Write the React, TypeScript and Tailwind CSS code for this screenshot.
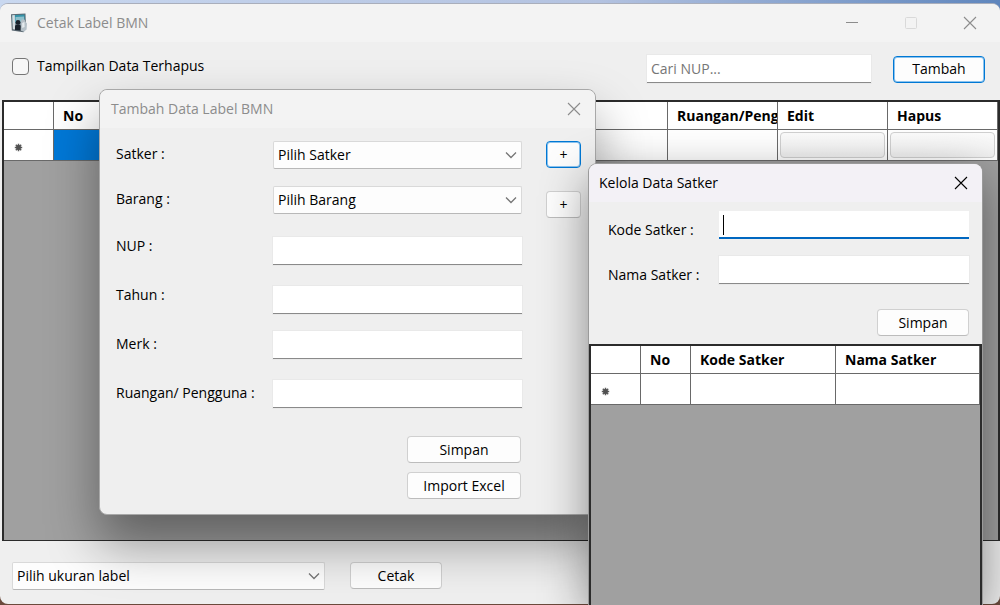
import type { ReactNode } from "react";

const inputClass =
  "block h-7 w-full border-0 border-b border-[#8a8a8a] bg-white px-1 text-sm text-black outline-none shadow-[0_0_0_1px_#e9e9e9] placeholder:text-[#767676]";

const buttonClass =
  "flex items-center justify-center rounded-[4px] border bg-[#fdfdfd] text-sm text-black";

function Button({
  children,
  size,
  primary = false,
}: {
  children: ReactNode;
  size: string;
  primary?: boolean;
}) {
  return (
    <button
      type="button"
      className={`${buttonClass} ${size} ${
        primary
          ? "border-[#0078d4] shadow-[inset_0_0_0_1px_#8cc3ee]"
          : "border-[#d0d0d0] border-b-[#bcbcbc]"
      }`}
    >
      {children}
    </button>
  );
}

function Select({ id, label, option }: { id: string; label?: string; option: string }) {
  return (
    <div className="relative">
      <select
        id={id}
        aria-label={label}
        className="block h-7 w-full appearance-none rounded-[2px] border border-[#d9d9d9] border-b-[#b8b8b8] bg-[#fdfdfd] px-1 text-sm text-black outline-none"
      >
        <option>{option}</option>
      </select>
      <svg
        viewBox="0 0 12 8"
        className="pointer-events-none absolute right-[5px] top-2.5 h-2 w-3"
        fill="none"
        stroke="#767676"
        strokeWidth="1.3"
      >
        <path d="M1 1.5 6 6.5 11 1.5" />
      </svg>
    </div>
  );
}

function CloseIcon() {
  return (
    <svg viewBox="0 0 14 14" className="size-3.5" fill="none" stroke="currentColor" strokeWidth="1.1">
      <path d="M1 1 13 13M13 1 1 13" />
    </svg>
  );
}

function NewRowMark() {
  return (
    <svg viewBox="0 0 9 9" className="size-[9px]" stroke="#5a5a5a" strokeWidth="1.5">
      <path d="M4.5 0.8V8.2M0.8 4.5H8.2M1.8 1.8 7.2 7.2M1.8 7.2 7.2 1.8" />
      <circle cx="4.5" cy="4.5" r="2.4" fill="#505050" stroke="none" />
    </svg>
  );
}

function AppIcon() {
  return (
    <svg viewBox="0 0 18 20" className="h-5 w-[18px]">
      <path d="M1 1.2 15.5 0.6 16 15 13.5 19.2 1.8 17.4Z" fill="#5b6973" />
      <path d="M2.2 2.2 14.5 1.6 14.8 9 2.6 10Z" fill="#3493a8" />
      <path d="M5.5 4 14 3.4 14.2 9 5.5 9.6Z" fill="#8dbfcb" />
      <path d="M2.2 2.2 4.8 2.1 5.2 16.6 2.8 16.2Z" fill="#d5dde1" />
      <path d="M5 9.8 14.5 8 15 16 5.2 16.6Z" fill="#8395a0" />
      <circle cx="8" cy="9.4" r="2.4" fill="#18212b" />
      <path d="M5 17V13.8Q5 11.4 8 11.4T11 13.8V17.4Z" fill="#18212b" />
      <path d="M11 8.5Q11 6.5 13 6.3T15.3 8.5L17 10.5 16.6 16.5 13.8 18.8 10.6 17.4Z" fill="#b5c0c7" />
      <path d="M12.2 10 14.4 9 14.6 14 12.2 15Z" fill="#e6ebee" />
    </svg>
  );
}

const th =
  "h-7 overflow-hidden border-b border-r border-[#696969] bg-white px-[9px] text-left text-sm font-bold whitespace-nowrap";
const td = "h-[31px] border-b border-r border-[#696969] bg-white p-0.5";
const cellButton =
  "block h-[26px] w-full rounded-[4px] border border-[#d0d0d0] bg-linear-to-b from-[#fbfbfb] to-[#f1f1f1]";

function MainGrid() {
  return (
    <table className="w-full table-fixed border-separate border-spacing-0">
      <colgroup>
        <col className="w-[50px]" />
        <col className="w-[60px]" />
        <col />
        <col className="w-[110px]" />
        <col className="w-[110px]" />
        <col className="w-[110px]" />
      </colgroup>
      <thead>
        <tr>
          <th className={th} />
          <th className={th}>No</th>
          <th className={th} />
          <th className="h-7 border-b border-r border-[#696969] bg-white pl-[9px] text-left text-sm font-bold whitespace-nowrap">
            <div className="overflow-hidden">Ruangan/Peng</div>
          </th>
          <th className={th}>Edit</th>
          <th className={th}>Hapus</th>
        </tr>
      </thead>
      <tbody>
        <tr>
          <td className={td}>
            <div className="flex pl-2 pt-1">
              <NewRowMark />
            </div>
          </td>
          <td className="border-b border-r border-[#696969] bg-[#0078d7]" />
          <td className={td} />
          <td className={td} />
          <td className={td}>
            <button type="button" aria-label="Edit" className={cellButton} />
          </td>
          <td className={td}>
            <button type="button" aria-label="Hapus" className={cellButton} />
          </td>
        </tr>
      </tbody>
    </table>
  );
}

function FormRow({
  id,
  label,
  gap,
  raised = false,
  children,
}: {
  id: string;
  label: string;
  gap: string;
  raised?: boolean;
  children: ReactNode;
}) {
  return (
    <div className={`flex items-start ${gap}`}>
      <label htmlFor={id} className={`w-[157px] shrink-0 text-sm ${raised ? "leading-[18px]" : "leading-[26px]"}`}>
        {label}
      </label>
      <div className="flex-1">{children}</div>
    </div>
  );
}

function AddDialog() {
  return (
    <section className="absolute left-[99px] top-[89px] w-[497px] rounded-lg border border-[#a8a8a8] bg-[#efefef] pb-[15px] shadow-[0_28px_52px_rgba(0,0,0,0.4)]">
      <header className="flex h-[38px] items-center justify-between rounded-t-lg bg-[#f3f3f3] pl-[11px] pr-[14px] text-[#8c8c8c]">
        <h2 className="text-sm">Tambah Data Label BMN</h2>
        <button type="button" aria-label="Tutup">
          <CloseIcon />
        </button>
      </header>
      <div className="flex gap-6 pl-4 pr-[14px] pt-[13px]">
        <form className="flex-1">
          <FormRow id="satker" label="Satker :" gap="mt-0">
            <Select id="satker" option="Pilih Satker" />
          </FormRow>
          <FormRow id="barang" label="Barang :" gap="mt-[17px]">
            <Select id="barang" option="Pilih Barang" />
          </FormRow>
          <FormRow id="nup" label="NUP :" gap="mt-[23px]" raised>
            <input id="nup" className={inputClass} />
          </FormRow>
          <FormRow id="tahun" label="Tahun :" gap="mt-[21px]" raised>
            <input id="tahun" className={inputClass} />
          </FormRow>
          <FormRow id="merk" label="Merk :" gap="mt-[17px]">
            <input id="merk" className={inputClass} />
          </FormRow>
          <FormRow id="ruangan" label="Ruangan/ Pengguna :" gap="mt-[21px]">
            <input id="ruangan" className={inputClass} />
          </FormRow>
          <div className="mt-[28px] flex flex-col items-end gap-[9px] pr-px">
            <Button size="h-[27px] w-[114px]">Simpan</Button>
            <Button size="h-[27px] w-[114px]">Import Excel</Button>
          </div>
        </form>
        <div className="flex flex-col gap-[23px]">
          <Button size="h-[27px] w-[35px]" primary>
            +
          </Button>
          <Button size="h-[27px] w-[35px]">+</Button>
        </div>
      </div>
    </section>
  );
}

function SatkerDialog() {
  return (
    <section className="absolute bottom-0 left-[589px] top-[164px] flex w-[393px] flex-col rounded-t-lg bg-[#efefef] shadow-[0_0_0_1px_#9a9a9a,0_14px_48px_rgba(0,0,0,0.45)]">
      <header className="flex h-[38px] items-center justify-between rounded-t-lg bg-[#f3f1f6] pl-[10px] pr-[14px] text-black">
        <h2 className="text-sm">Kelola Data Satker</h2>
        <button type="button" aria-label="Tutup">
          <CloseIcon />
        </button>
      </header>
      <form className="flex flex-col gap-[15px] pb-2 pl-[19px] pr-[13px] pt-2">
        <div className="flex items-center">
          <label htmlFor="kode" className="w-[111px] pt-2.5 text-sm">
            Kode Satker :
          </label>
          <div className="relative flex-1">
            <input id="kode" className="block h-7 w-full border-0 border-b-2 border-[#0067c0] bg-white px-1 text-sm outline-none" />
            <span className="absolute left-1 top-1 h-5 w-px bg-black" />
          </div>
        </div>
        <div className="flex items-center">
          <label htmlFor="nama" className="w-[111px] pt-2.5 text-sm">
            Nama Satker :
          </label>
          <div className="flex-1">
            <input id="nama" className={inputClass} />
          </div>
        </div>
        <div className="flex justify-end pt-[9px]">
          <Button size="h-[27px] w-[92px]">Simpan</Button>
        </div>
      </form>
      <div className="min-h-0 flex-1 border-2 border-b-0 border-[#2b2b2b] bg-[#a0a0a0]">
        <table className="w-full table-fixed border-separate border-spacing-0">
          <colgroup>
            <col className="w-[50px]" />
            <col className="w-[50px]" />
            <col className="w-[145px]" />
            <col />
          </colgroup>
          <thead>
            <tr>
              <th className={th} />
              <th className={th}>No</th>
              <th className={th}>Kode Satker</th>
              <th className={th}>Nama Satker</th>
            </tr>
          </thead>
          <tbody>
            <tr>
              <td className={td}>
                <div className="flex pl-2 pt-1">
                  <NewRowMark />
                </div>
              </td>
              <td className={td} />
              <td className={td} />
              <td className={td} />
            </tr>
          </tbody>
        </table>
      </div>
    </section>
  );
}

export default function App() {
  return (
    <div className="relative flex h-screen flex-col overflow-hidden bg-[#6b4a3c] pb-px pt-[3px] font-['Open_Sans','Noto_Sans',sans-serif] text-black">
      <div className="absolute inset-x-0 top-0 h-4 bg-linear-to-r from-[#c9d8f0] via-[#b3c2e0] via-60% to-[#5f86bd]" />
      <main className="relative flex min-h-0 flex-1 flex-col overflow-hidden rounded-lg border-t border-[#a9aebb] bg-[#efefef]">
        <header className="flex h-[38px] shrink-0 items-center justify-between bg-[#f3f3f3] pl-[10px] pr-[23px] text-[#8c8c8c]">
          <div className="flex items-center gap-[9px]">
            <AppIcon />
            <h1 className="text-sm">Cetak Label BMN</h1>
          </div>
          <div className="flex items-center gap-[45px]">
            <button type="button" aria-label="Perkecil">
              <svg viewBox="0 0 14 14" className="size-3.5" stroke="currentColor">
                <path d="M1 6.5H13" />
              </svg>
            </button>
            <button type="button" aria-label="Perbesar" disabled>
              <svg viewBox="0 0 14 14" className="size-3.5" fill="none" stroke="#d9d9d9">
                <rect x="1.5" y="1.5" width="11" height="11" rx="1" />
              </svg>
            </button>
            <button type="button" aria-label="Tutup">
              <CloseIcon />
            </button>
          </div>
        </header>
        <div className="flex h-[58px] shrink-0 items-start pl-3 pr-[15px] pt-[13px]">
          <div className="flex h-[22px] items-center gap-2">
            <input
              id="terhapus"
              type="checkbox"
              className="size-[17px] appearance-none rounded-[4px] border border-[#767676] bg-[#f7f7f7]"
            />
            <label htmlFor="terhapus" className="text-sm">
              Tampilkan Data Terhapus
            </label>
          </div>
          <div className="ml-auto flex items-center gap-[22px]">
            <div className="w-56">
              <input aria-label="Cari NUP" placeholder="Cari NUP..." className={inputClass} />
            </div>
            <Button size="h-[27px] w-[92px]" primary>
              Tambah
            </Button>
          </div>
        </div>
        <div className="ml-0.5 min-h-0 flex-1 border-2 border-b border-[#2b2b2b] bg-[#a0a0a0]">
          <MainGrid />
        </div>
        <footer className="flex h-[63px] shrink-0 items-start gap-[25px] px-3 pt-[21px]">
          <div className="w-[313px]">
            <Select id="ukuran" label="Ukuran label" option="Pilih ukuran label" />
          </div>
          <Button size="h-[27px] w-[92px]">Cetak</Button>
        </footer>
      </main>
      <AddDialog />
      <SatkerDialog />
    </div>
  );
}
